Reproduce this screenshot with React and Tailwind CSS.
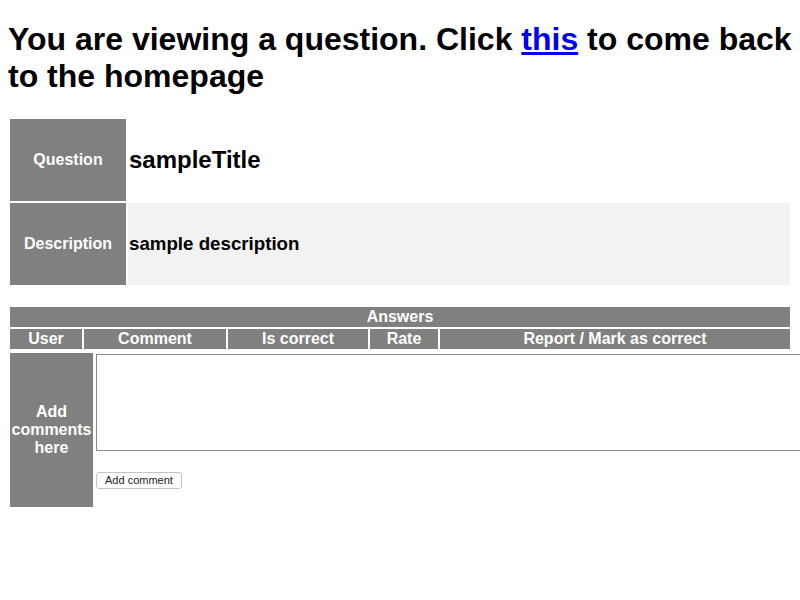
export default function App() {
  return (
    <div className="min-h-[600px] w-full overflow-hidden bg-white px-[8px] pt-[21px] text-black font-['Liberation_Sans',Arial,Helvetica,sans-serif]">
      <h1 className="mb-[22px] text-[32px] font-bold leading-[37px]">
        You are viewing a question. Click <a href="#" className="text-[#0000ee] underline">this</a> to come back to the homepage
      </h1>

      {/* question + description */}
      <div className="grid grid-cols-[116px_minmax(0,1fr)] gap-[2px] p-[2px]">
        <div className="flex h-[82px] items-center justify-center bg-[#808080] text-[16px] font-bold text-white">
          Question
        </div>
        <div className="flex h-[82px] items-center bg-white px-[1px]">
          <h2 className="text-[24px] font-bold">sampleTitle</h2>
        </div>
        <div className="flex h-[82px] items-center justify-center bg-[#808080] text-[16px] font-bold text-white">
          Description
        </div>
        <div className="flex h-[82px] items-center bg-[#f2f2f2] px-[1px]">
          <h3 className="text-[18.72px] font-bold">sample description</h3>
        </div>
      </div>

      {/* answers */}
      <div className="mt-[18px] grid grid-cols-[72px_142px_140px_68px_minmax(0,1fr)] gap-[2px] p-[2px] text-[16px] font-bold text-white">
        <div className="col-span-5 h-[20px] bg-[#808080] text-center leading-[20px]">Answers</div>
        <div className="h-[20px] bg-[#808080] text-center leading-[20px]">User</div>
        <div className="h-[20px] bg-[#808080] text-center leading-[20px]">Comment</div>
        <div className="h-[20px] bg-[#808080] text-center leading-[20px]">Is correct</div>
        <div className="h-[20px] bg-[#808080] text-center leading-[20px]">Rate</div>
        <div className="h-[20px] bg-[#808080] text-center leading-[20px]">Report / Mark as correct</div>
      </div>

      {/* add comment */}
      <div className="grid grid-cols-[83px_minmax(0,1fr)] gap-[2px] p-[2px]">
        <div className="flex h-[154px] items-center justify-center bg-[#808080] text-center text-[16px] font-bold leading-[18px] text-white">
          Add
          <br />
          comments
          <br />
          here
        </div>
        <div className="p-[1px]">
          <textarea className="block h-[97px] w-[720px] resize-none border border-[#8a8a8a] bg-white outline-none" />
          <button className="mt-[21px] block h-[17px] rounded-[3px] border border-[#c4c4c4] bg-white px-[8px] text-[11px] leading-[15px] text-[#222]">
            Add comment
          </button>
        </div>
      </div>
    </div>
  );
}
